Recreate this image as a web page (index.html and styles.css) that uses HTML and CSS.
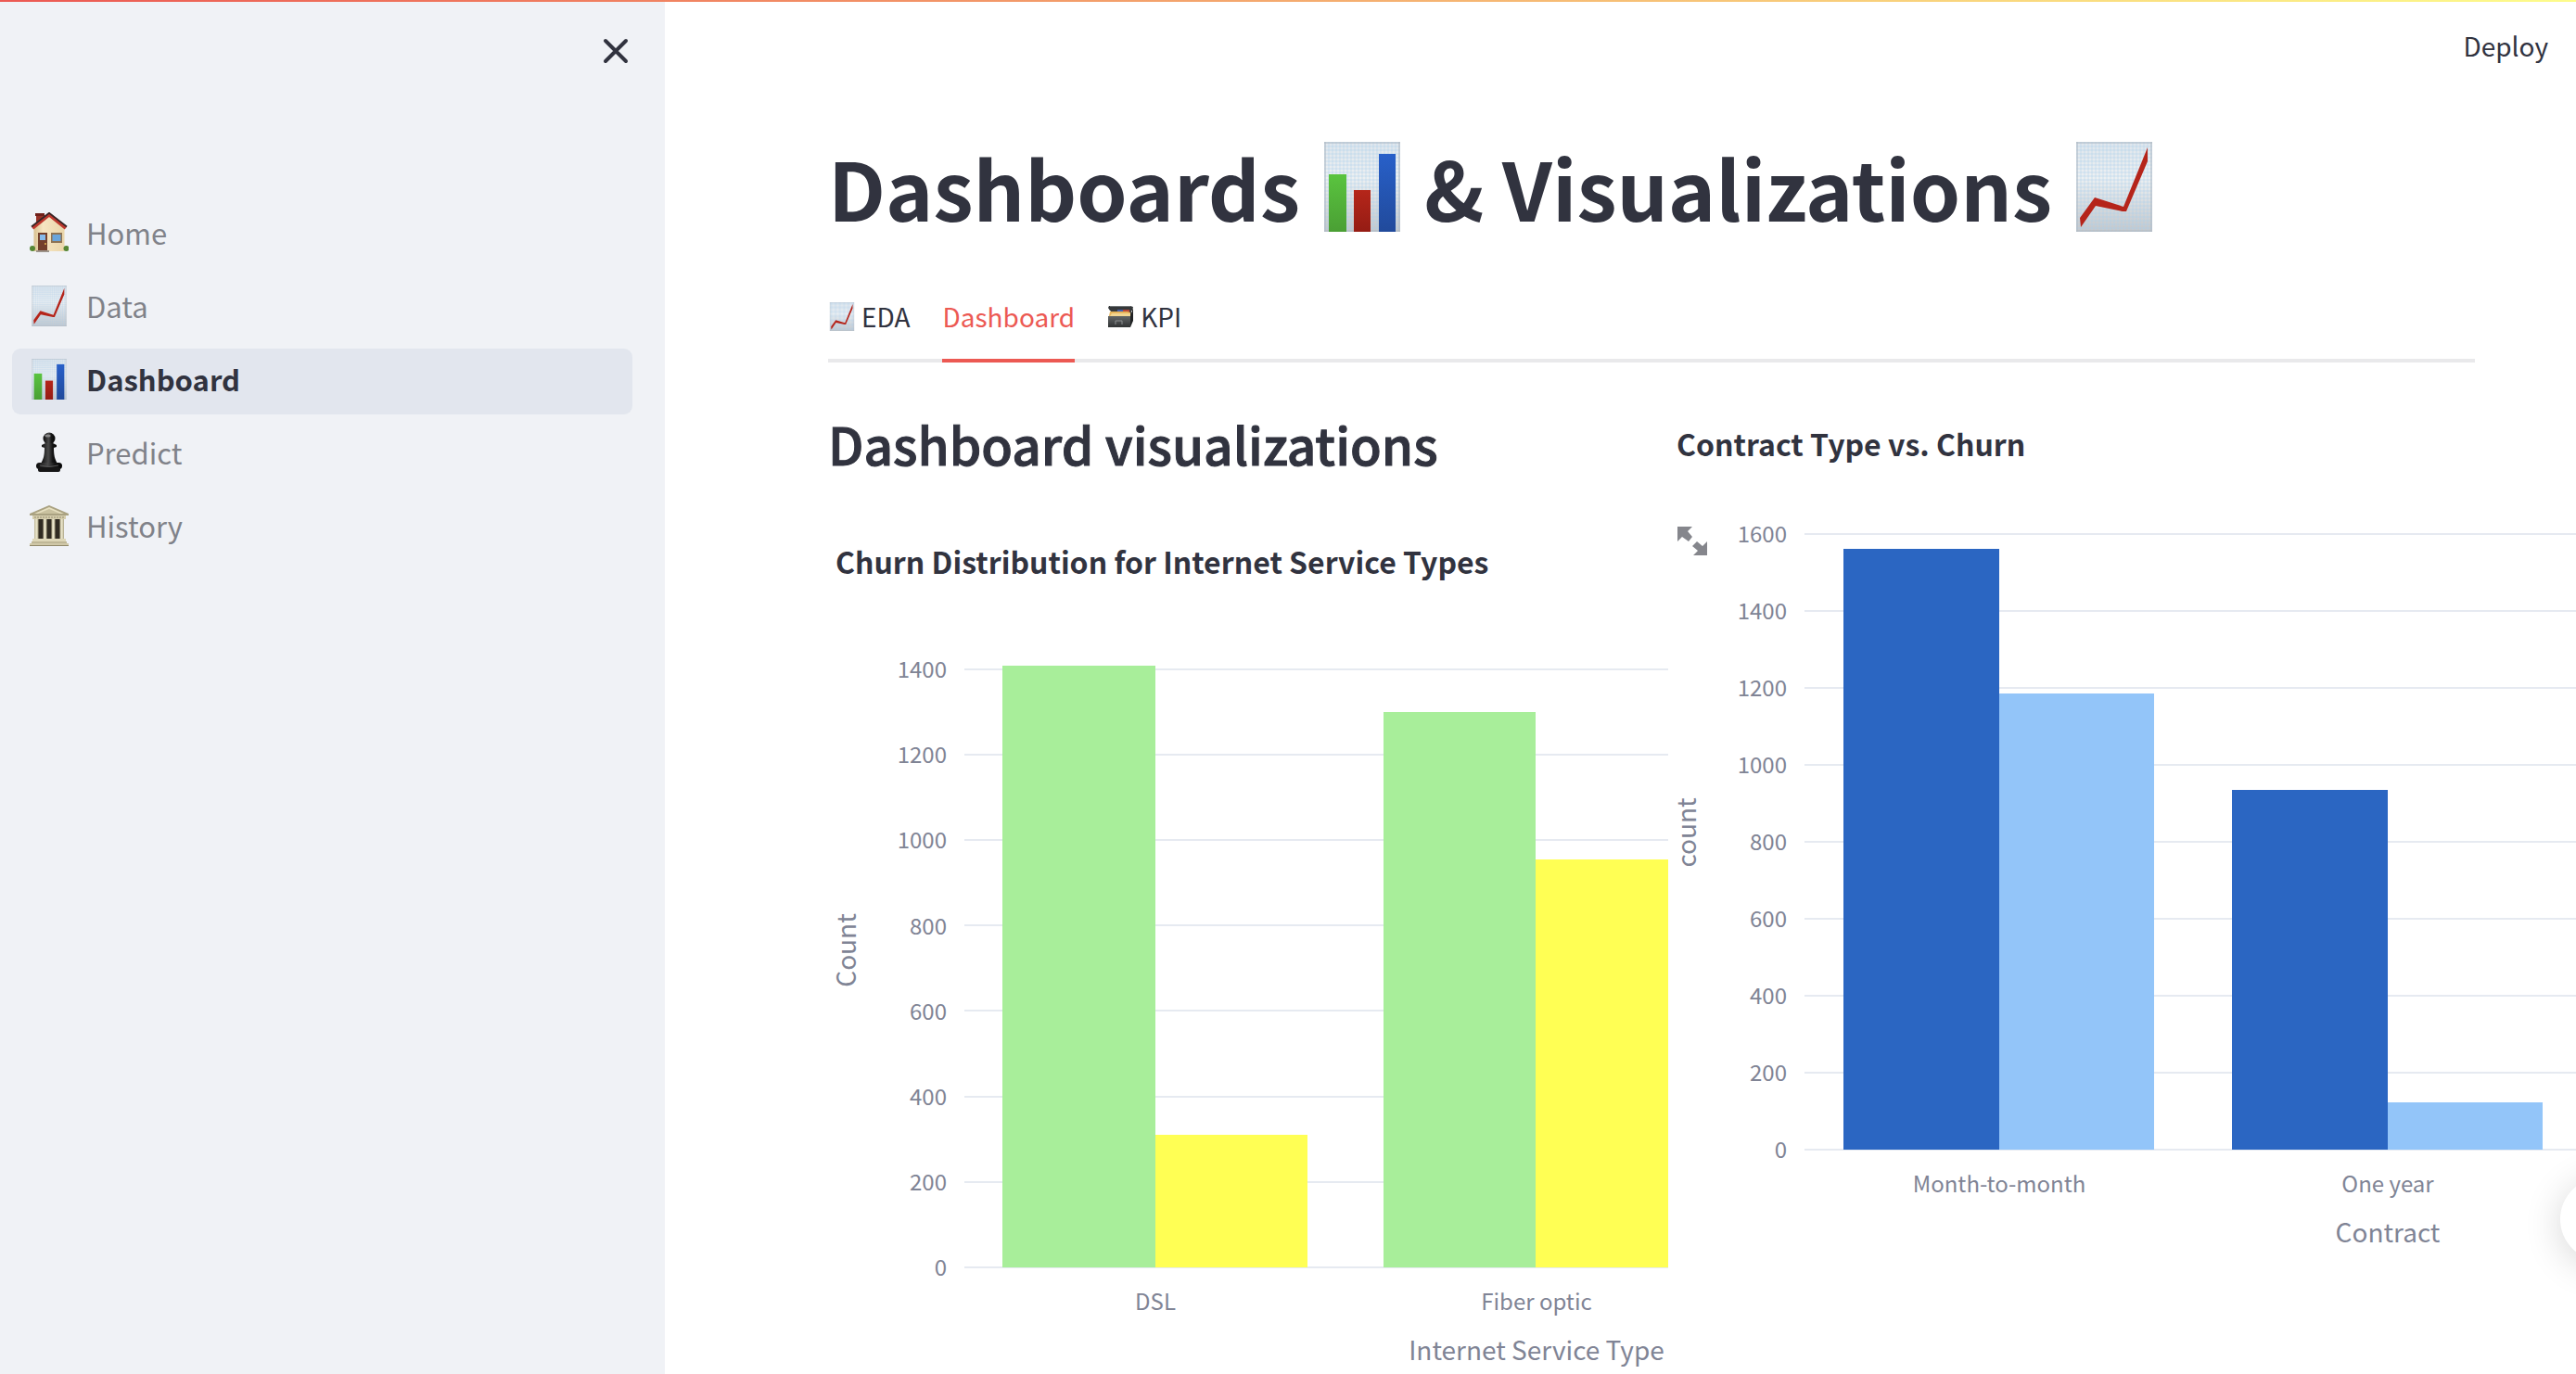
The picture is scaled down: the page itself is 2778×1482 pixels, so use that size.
FILE: index.html
```html
<!DOCTYPE html>
<html lang="en">
<head>
<meta charset="utf-8">
<meta name="viewport" content="width=device-width, initial-scale=1">
<title>Dashboard</title>
<link rel="stylesheet" href="styles.css">
</head>
<body>
<svg class="sprite" aria-hidden="true">
  <defs>
    <linearGradient id="paper" x1="0" y1="0" x2="0" y2="1"><stop offset="0" stop-color="#dfe6ec"/><stop offset=".4" stop-color="#edf0f2"/><stop offset="1" stop-color="#c3c7cb"/></linearGradient>
    <linearGradient id="green" x1="0" y1="0" x2="0" y2="1"><stop offset="0" stop-color="#5ac43f"/><stop offset="1" stop-color="#4a9f34"/></linearGradient>
    <linearGradient id="red" x1="0" y1="0" x2="0" y2="1"><stop offset="0" stop-color="#b5261a"/><stop offset="1" stop-color="#951c14"/></linearGradient>
    <linearGradient id="blue" x1="0" y1="0" x2="0" y2="1"><stop offset="0" stop-color="#2860c9"/><stop offset="1" stop-color="#214a9b"/></linearGradient>
    <linearGradient id="stone" x1="0" y1="0" x2="1" y2="0"><stop offset="0" stop-color="#b9b293"/><stop offset=".5" stop-color="#eee9cf"/><stop offset="1" stop-color="#aaa385"/></linearGradient>
    <linearGradient id="black" x1="0" y1="0" x2="1" y2="0"><stop offset="0" stop-color="#080808"/><stop offset=".45" stop-color="#4a4a4a"/><stop offset=".7" stop-color="#151515"/><stop offset="1" stop-color="#050505"/></linearGradient>
    <linearGradient id="wall" x1="0" y1="0" x2="1" y2="0"><stop offset="0" stop-color="#d9c08f"/><stop offset=".3" stop-color="#f6e5c2"/><stop offset="1" stop-color="#ead6aa"/></linearGradient>
    <linearGradient id="drawer" x1="0" y1="0" x2="0" y2="1"><stop offset="0" stop-color="#636667"/><stop offset="1" stop-color="#303233"/></linearGradient>
    <pattern id="mesh" width="4" height="4" patternUnits="userSpaceOnUse"><path d="M0 1h4M1 0v4" stroke="#a9cdec" stroke-width="1" fill="none" opacity=".5"/></pattern>
  </defs>
  <symbol id="i-trend" viewBox="0 0 82 97">
    <path d="M0 0h82v97H0z" fill="url(#paper)"/><path d="M0 0h82v97H0z" fill="url(#mesh)"/><path d="M1 0v97M81 0v97M0 1h82M0 96h82" stroke="#b3bac2" stroke-width="1"/>
    <path d="M4 82 20 60l31 10L77 6v15L54 75h-4L21 69 5 92z" fill="#b5241a"/>
  </symbol>
  <symbol id="i-bars" viewBox="0 0 82 97">
    <path d="M0 0h82v97H0z" fill="url(#paper)"/><path d="M0 0h82v97H0z" fill="url(#mesh)"/><path d="M1 0v97M81 0v97M0 1h82M0 96h82" stroke="#b3bac2" stroke-width="1"/>
    <path d="M5 35h19v62H5z" fill="url(#green)"/><path d="M32 52h18v45H32z" fill="url(#red)"/><path d="M59 13h18v84H59z" fill="url(#blue)"/>
  </symbol>
  <symbol id="i-house" viewBox="0 0 42 44">
    <path d="M7 15V2h8v9z" fill="#963227"/><path d="M6 1h10v3H6z" fill="#702019"/>
    <path d="M4.500 16 21 2l16.500 14V42H4.500z" fill="url(#wall)"/>
    <path d="M3 17 21 2.500 39 17" fill="none" stroke="#bd382e" stroke-width="4"/><path d="M2 15.500 21 .800 40 15.500" fill="none" stroke="#352525" stroke-width="1.800"/>
    <path d="M9 22h10v20H9z" fill="#74402b"/><path d="M11 24h6v6h-6z" fill="#86baeb"/><circle cx="17" cy="34" r="1" fill="#e5b851"/>
    <path d="M23 22h12v11H23z" fill="#8d7354"/><path d="M24.500 24h9v7h-9z" fill="#69a5dc"/>
    <circle cx="3" cy="39" r="3" fill="#568634"/><circle cx="39.500" cy="39" r="3" fill="#568634"/><path d="M7 41h14v2H7z" fill="#9c9389"/>
  </symbol>
  <symbol id="i-pawn" viewBox="0 0 42 44">
    <circle cx="21" cy="7" r="6.500" fill="url(#black)"/>
    <path d="M17 12h8l4 2v2l-3 1c0 8 1 12 4 17H12c3-5 4-9 4-17l-3-1v-2z" fill="url(#black)"/><rect x="7" y="33" width="28" height="7" rx="3.500" fill="url(#black)"/><rect x="9" y="38" width="24" height="5" rx="2" fill="#161616"/><ellipse cx="19.500" cy="4" rx="3" ry="1.500" fill="#888"/><path d="M11 36q10 3 20 0" stroke="#555" fill="none"/>
  </symbol>
  <symbol id="i-temple" viewBox="0 0 42 44">
    <path d="M5 14h32v24H5z" fill="#302b22"/><path d="M0 9 21 0l21 9v2H0z" fill="#aaa282"/><path d="M5 9 21 2l16 7z" fill="#e6dfbf"/><path d="M9 9 21 4l12 5z" fill="#c9c19f"/>
    <path d="M3 11h36v4H3z" fill="#d5cdac"/><path d="M5 13h32" stroke="#958d70" stroke-dasharray="2 1"/>
    <path d="M5 15h4.500v22H5z" fill="url(#stone)"/><path d="M14.500 15h4v22h-4z" fill="url(#stone)"/><path d="M23.500 15h4v22h-4z" fill="url(#stone)"/><path d="M32.500 15H37v22h-4.500z" fill="url(#stone)"/>
    <path d="M3 36h36v3H3z" fill="#ded7b8"/><path d="M2 39h38v2H2z" fill="#bfb797"/><path d="M0 41h42v3H0z" fill="#d0c8a8"/><path d="M0 43.500h42" stroke="#908869"/>
  </symbol>
  <symbol id="i-files" viewBox="0 0 30 24">
    <path d="M2 1h23l3 1-1 4H3L1 3z" fill="#35383a"/><path d="M3 1h22v1H3z" fill="#727678"/><path d="M4 5h22v7H3z" fill="#3a3c3c"/>
    <path d="M11 5h6v3h-6z" fill="#4760ae"/><path d="M17 5h7v3h-7z" fill="#bb4839"/><path d="M3 7h19l3 1v4H2z" fill="#e9b65c"/><path d="M5 9h20v3H3z" fill="#f2d591"/>
    <path d="M1 12h24v12H1z" fill="url(#drawer)"/><path d="m25 12 3-9v14l-3 7z" fill="#202223"/><path d="M9 21v-4h7v4" fill="none" stroke="#8b8e90"/>
  </symbol>
</svg>

<div class="ribbon"></div>
<div class="app">
  <aside class="sidebar">
    <button class="close" type="button" aria-label="Close sidebar">
      <svg width="28" height="28" viewBox="0 0 28 28"><path d="m3 3 22 22M25 3 3 25" fill="none" stroke="#31333f" stroke-width="4" stroke-linecap="round"/></svg>
    </button>
    <nav>
      <ul class="nav">
        <li><a class="nav-link" href="#home"><svg class="nav-icon"><use href="#i-house"/></svg><span>Home</span></a></li>
        <li><a class="nav-link" href="#data"><svg class="nav-icon"><use href="#i-trend"/></svg><span>Data</span></a></li>
        <li><a class="nav-link active" href="#dashboard" aria-current="page"><svg class="nav-icon"><use href="#i-bars"/></svg><span>Dashboard</span></a></li>
        <li><a class="nav-link" href="#predict"><svg class="nav-icon"><use href="#i-pawn"/></svg><span>Predict</span></a></li>
        <li><a class="nav-link" href="#history"><svg class="nav-icon"><use href="#i-temple"/></svg><span>History</span></a></li>
      </ul>
    </nav>
  </aside>

  <main class="main">
    <header class="toolbar"><button class="deploy" type="button">Deploy</button></header>
    <div class="content">
      <h1 class="title"><span>Dashboards</span><svg class="title-icon"><use href="#i-bars"/></svg><span>&amp; Visualizations</span><svg class="title-icon"><use href="#i-trend"/></svg></h1>
      <div class="tabs" role="tablist">
        <button class="tab" type="button" role="tab" aria-selected="false"><svg class="tab-icon trend"><use href="#i-trend"/></svg>EDA</button>
        <button class="tab selected" type="button" role="tab" aria-selected="true">Dashboard</button>
        <button class="tab" type="button" role="tab" aria-selected="false"><svg class="tab-icon"><use href="#i-files"/></svg>KPI</button>
      </div>

      <div class="columns">
        <section class="column">
          <h2 class="subtitle">Dashboard visualizations</h2>
          <svg class="chart clipped" role="img" aria-label="Churn Distribution for Internet Service Types">
            <text class="chart-title" x="8" y="59">Churn Distribution for Internet Service Types</text>
            <path class="grid" d="M147 162h1000M147 254h1000M147 346h1000M147 438h1000M147 530h1000M147 623h1000M147 715h1000M147 807h1000"/>
            <g class="tick end"><text x="128" y="171">1400</text><text x="128" y="263">1200</text><text x="128" y="355">1000</text><text x="128" y="448">800</text><text x="128" y="540">600</text><text x="128" y="632">400</text><text x="128" y="724">200</text><text x="128" y="816">0</text></g>
            <g class="green"><rect x="188" y="158" width="165" height="649"/><rect x="599" y="208" width="164" height="599"/></g>
            <g class="yellow"><rect x="353" y="664" width="164" height="143"/><rect x="763" y="367" width="164" height="440"/></g>
            <g class="tick middle"><text x="353" y="853">DSL</text><text x="764" y="853">Fiber optic</text></g>
            <text class="axis" x="764" y="907">Internet Service Type</text>
            <text class="axis" transform="translate(30 465) rotate(-90)">Count</text>
          </svg>
        </section>
        <section class="column">
          <svg class="chart" role="img" aria-label="Contract Type vs. Churn">
            <text class="chart-title" x="-1" y="60">Contract Type vs. Churn</text>
            <path class="grid" d="M137 144h1000M137 227h1000M137 310h1000M137 393h1000M137 476h1000M137 559h1000M137 642h1000M137 725h1000M137 808h1000"/>
            <g class="tick end"><text x="118" y="153">1600</text><text x="118" y="236">1400</text><text x="118" y="319">1200</text><text x="118" y="402">1000</text><text x="118" y="485">800</text><text x="118" y="568">600</text><text x="118" y="651">400</text><text x="118" y="734">200</text><text x="118" y="817">0</text></g>
            <g class="navy"><rect x="179" y="160" width="168" height="648"/><rect x="598" y="420" width="168" height="388"/></g>
            <g class="sky"><rect x="347" y="316" width="167" height="492"/><rect x="766" y="757" width="167" height="51"/></g>
            <g class="tick middle"><text x="347" y="854">Month-to-month</text><text x="766" y="854">One year</text></g>
            <text class="axis" x="766" y="908">Contract</text>
            <text class="axis" transform="translate(20 466) rotate(-90)">count</text>
          </svg>
          <button class="expand" type="button" aria-label="View fullscreen">
            <svg width="32" height="32" viewBox="0 0 32 32"><path d="M0 0h16l-5 5 5 6-4 5-7-5-5 5zM32 31H17l5-5-6-5 5-5 6 5 5-5z" fill="#85868c"/></svg>
          </button>
        </section>
      </div>
    </div>
  </main>
</div>
<button class="bubble" type="button" aria-label="Open assistant"></button>
</body>
</html>
```
FILE: styles.css
```css
* { box-sizing: border-box; }
html, body { height: 100%; }
body {
  margin: 0;
  overflow: hidden;
  background: #fff;
  color: #31333f;
  font-family: "Noto Sans CJK SC", "Noto Sans", sans-serif;
  font-size: 28px;
}
button { border: 0; padding: 0; background: none; color: inherit; font: inherit; cursor: pointer; }
svg { display: block; }
.sprite { position: absolute; width: 0; height: 0; }
.ribbon {
  position: fixed;
  z-index: 2;
  top: 0;
  left: 0;
  right: 0;
  height: 2px;
  background: linear-gradient(90deg, #ec5953, #fdfc8b);
}
.app { display: flex; min-height: 100%; }

.sidebar { flex: 0 0 717px; padding: 41px 35px 0 13px; background: #f0f2f6; }
.close { display: block; margin: 0 4px 149px auto; }
.nav { display: grid; gap: 8px; margin: 0; padding: 0; list-style: none; }
.nav-link {
  display: flex;
  align-items: center;
  gap: 19px;
  height: 71px;
  padding: 0 19px 5px;
  border-radius: 9px;
  color: #808289;
  font-size: 31px;
  line-height: 48px;
  text-decoration: none;
}
.nav-link.active { background: #e2e6ee; color: #31333f; font-weight: 700; }
.nav-icon { width: 42px; height: 44px; }

.main { flex: 1; min-width: 0; }
.toolbar { display: flex; justify-content: flex-end; padding: 28px 30px 32px; }
.deploy { line-height: 42px; }
.content { padding: 47px 109px 0 176px; }
.title {
  display: flex;
  align-items: center;
  gap: 26px;
  margin: 0 0 64px;
  font-size: 87px;
  line-height: 104px;
  font-weight: 700;
  white-space: nowrap;
}
.title-icon { width: 82px; height: 97px; }
.tabs { display: flex; gap: 35px; height: 74px; border-bottom: 4px solid #e9e9eb; }
.tab { display: flex; align-items: center; gap: 6px; height: 74px; padding-bottom: 22px; border-bottom: 4px solid transparent; }
.tab.selected { border-color: #ec5953; color: #ec5953; }
.tab-icon { width: 30px; height: 24px; }
.tab-icon.trend { height: 31px; }

.columns { display: grid; grid-template-columns: 79fr 75fr; gap: 10px; padding-top: 41px; }
.column { position: relative; min-width: 0; }
.subtitle {
  margin: 0 0 36px;
  font-size: 55px;
  line-height: 92px;
  font-weight: 500;
  white-space: nowrap;
  -webkit-text-stroke: 1px #31333f;
}
.chart { width: 100%; height: 922px; overflow: visible; }
.chart.clipped { clip-path: inset(0 0 0 -20px); }
.chart-title { fill: #31333f; font-size: 32px; font-weight: 700; }
.grid { fill: none; stroke: #e6eaf1; stroke-width: 2px; }
.tick { fill: #808495; font-size: 24px; }
.tick.end { text-anchor: end; }
.tick.middle { text-anchor: middle; }
.axis { fill: #808495; font-size: 28px; text-anchor: middle; }
.green { fill: #a8ee9a; }
.yellow { fill: #ffff54; }
.navy { fill: #2b66c2; }
.sky { fill: #93c5f9; }
.expand { position: absolute; top: 136px; left: 0; }
.bubble {
  position: fixed;
  top: 1270px;
  right: -73px;
  width: 90px;
  height: 90px;
  border-radius: 50%;
  background: #fff;
  box-shadow: 0 6px 40px rgba(0, 0, 0, .16);
}
```
